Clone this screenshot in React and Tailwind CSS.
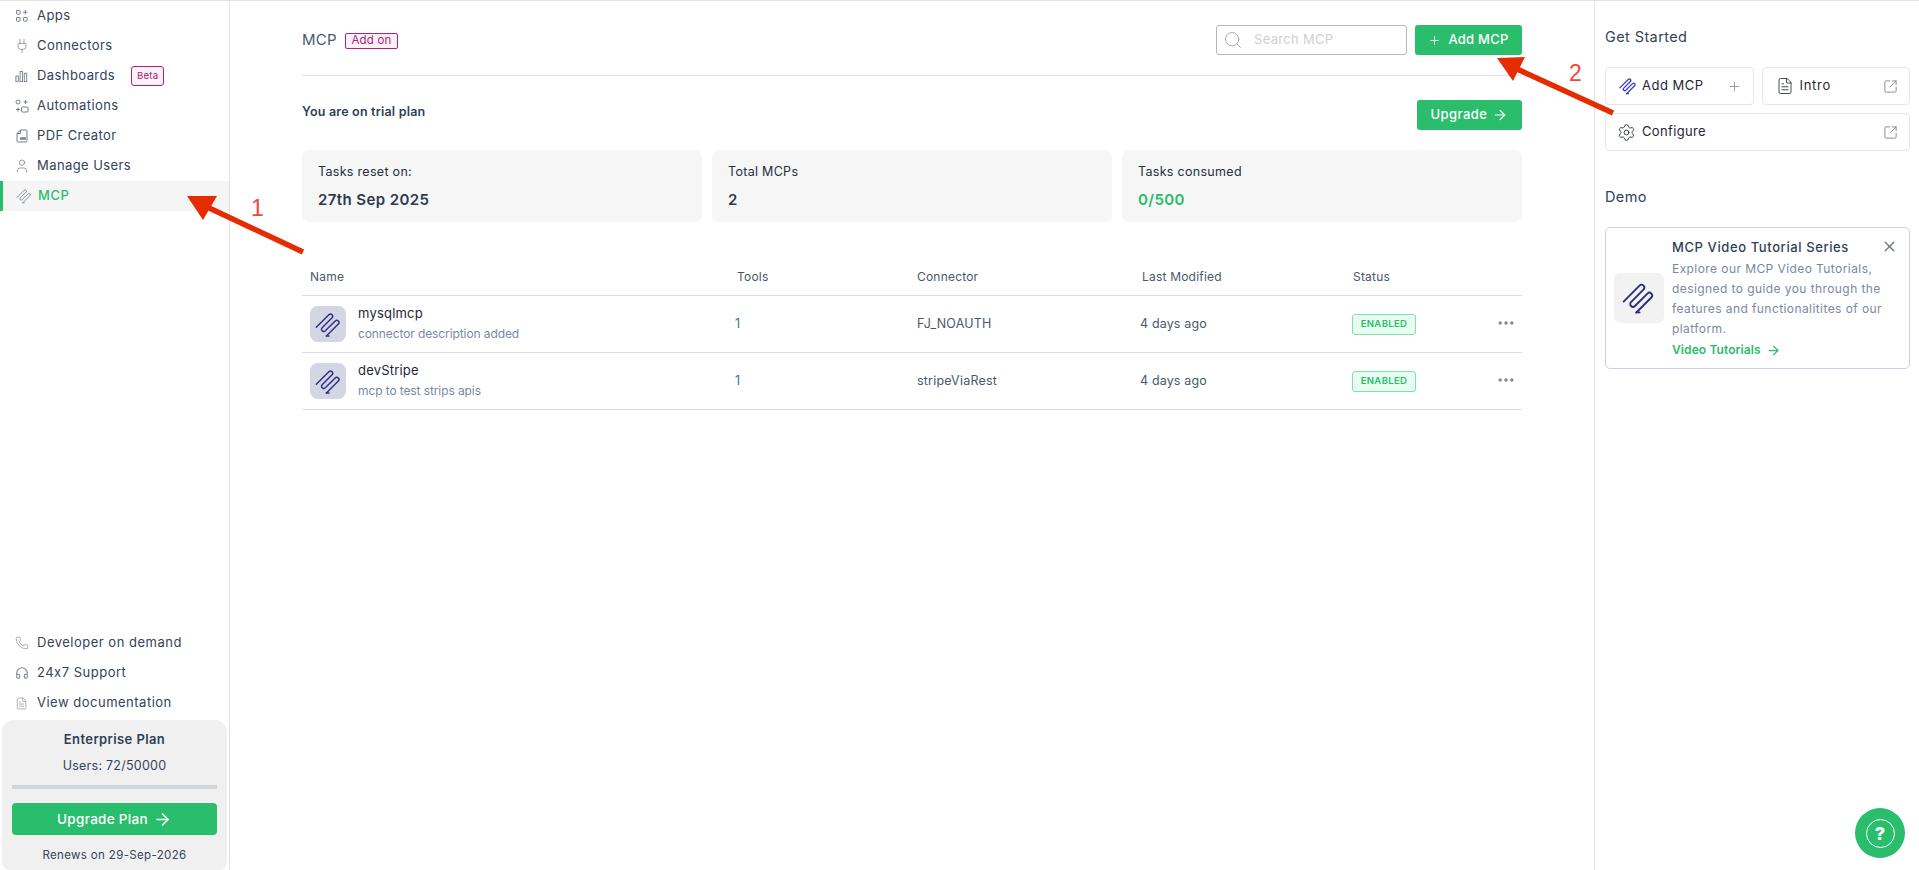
import { Plug, User, Phone, Headphones, FileText, Plus, Search, ArrowRight, Ellipsis, SquareArrowOutUpRight, Settings, X } from "lucide-react";

function McpIcon({ className, sw = 2 }) {
  return (
    <svg viewBox="0 0 28 28" fill="none" stroke="currentColor" strokeWidth={sw} strokeLinecap="round" strokeLinejoin="round" className={className}>
      <g transform="rotate(-45 14 14)">
        <path d="M3 7.1H21.5a2.3 2.3 0 0 1 0 4.6H7a2.3 2.3 0 0 0 0 4.6H21.5a2.3 2.3 0 0 1 0 4.6H4" />
      </g>
      <path d="M11.8 25.9h2.7" />
    </svg>
  );
}

function AppsIcon() {
  return (
    <svg viewBox="0 0 14 14" fill="none" stroke="currentColor" strokeWidth="1" className="w-[14px] h-[14px]">
      <rect x="1.5" y="1.5" width="3.6" height="3.6" rx="0.5" />
      <rect x="1.5" y="8.5" width="3.6" height="3.6" rx="0.5" />
      <rect x="8.5" y="8.5" width="3.6" height="3.6" rx="0.5" />
      <path d="M10.3 1v4.4M8.1 3.2h4.4" />
    </svg>
  );
}

function BarsIcon() {
  return (
    <svg viewBox="0 0 14 14" fill="none" stroke="currentColor" strokeWidth="1" className="w-[13px] h-[13px]">
      <rect x="1" y="6.5" width="2.6" height="6" />
      <rect x="5.5" y="1.5" width="2.6" height="11" />
      <rect x="10" y="3.5" width="2.6" height="9" />
    </svg>
  );
}

function FlowIcon() {
  return (
    <svg viewBox="0 0 14 14" fill="none" stroke="currentColor" strokeWidth="1" className="w-[14px] h-[14px]">
      <circle cx="3" cy="3" r="2" />
      <rect x="6.5" y="8" width="6.5" height="5" rx="1" />
      <path d="M10.5 1v4M8.5 3h4M1 10.5h4M3 8.5v4" />
    </svg>
  );
}

function PdfIcon() {
  return (
    <svg viewBox="0 0 14 14" fill="none" stroke="currentColor" strokeWidth="1" className="w-[14px] h-[14px]">
      <path d="M5.5 1h5.5a1 1 0 0 1 1 1v10a1 1 0 0 1-1 1H3a1 1 0 0 1-1-1V4.5z" />
      <path d="M5.5 1v3.5H2" />
      <path d="M5 9.5h6" strokeWidth="2.4" />
    </svg>
  );
}

const navItems = [
  { label: "Apps", icon: <AppsIcon /> },
  { label: "Connectors", icon: <Plug className="w-[16px] h-[16px] -ml-[1px]" strokeWidth={1.1} /> },
  { label: "Dashboards", icon: <BarsIcon /> , beta: true },
  { label: "Automations", icon: <FlowIcon /> },
  { label: "PDF Creator", icon: <PdfIcon /> },
  { label: "Manage Users", icon: <User className="w-[16px] h-[16px] -ml-[1px]" strokeWidth={1.1} /> },
];

const helpItems = [
  { label: "Developer on demand", icon: <Phone className="w-[14px] h-[14px]" strokeWidth={1.1} /> },
  { label: "24x7 Support", icon: <Headphones className="w-[14px] h-[14px]" strokeWidth={1.75} /> },
  { label: "View documentation", icon: <FileText className="w-[13px] h-[13px]" strokeWidth={1.1} /> },
];

const rows = [
  { name: "mysqlmcp", desc: "connector description added", connector: "FJ_NOAUTH" },
  { name: "devStripe", desc: "mcp to test strips apis", connector: "stripeViaRest" },
];

function Sidebar() {
  return (
    <aside className="w-[230px] shrink-0 border-r border-[#e2e2e2] flex flex-col justify-between">
      <nav className="flex flex-col">
        {navItems.map((item) => (
          <div key={item.label} className="h-[30px] pl-[15px] flex items-center text-[13px] tracking-[0.42px] text-[#33435a]">
            <span className="w-[22px] text-[#77808c] flex">{item.icon}</span>
            <span>{item.label}</span>
            {item.beta && (
              <span className="ml-[16px] h-[20px] w-[33px] flex items-center justify-center rounded-[3px] border border-[#ab2277] bg-[#fdf1f8] text-[#ab2277] text-[9.5px] tracking-[0.3px]">Beta</span>
            )}
          </div>
        ))}
        <div className="h-[30px] pl-[15px] flex items-center text-[13px] tracking-[0.55px] text-[#2abd6c] font-medium bg-[#f5f5f5] border-l-[3px] border-[#2abd6c]">
          <span className="w-[22px] -ml-[2px] text-[#808890] flex"><McpIcon className="w-[16px] h-[16px]" sw={1.5} /></span>
          <span>MCP</span>
        </div>
      </nav>
      <div className="flex flex-col">
        {helpItems.map((item) => (
          <div key={item.label} className="h-[30px] pl-[15px] flex items-center text-[13px] tracking-[0.5px] text-[#33435a]">
            <span className="w-[22px] text-[#77808c] flex">{item.icon}</span>
            <span>{item.label}</span>
          </div>
        ))}
        <div className="mt-[2px] mx-[2px] h-[150px] rounded-t-[12px] rounded-b-[8px] bg-[#f0f0f0] px-[10px] flex flex-col items-center">
          <div className="mt-[11px] text-[13px] leading-[16px] font-semibold tracking-[0.4px] text-[#2f3f56]">Enterprise Plan</div>
          <div className="mt-[11px] text-[12.5px] leading-[16px] tracking-[0.25px] text-[#33435a]">Users: 72/50000</div>
          <div className="mt-[11px] h-[4px] w-full bg-[#d1d6d8]" />
          <div className="mt-[14px] h-[32px] w-full rounded-[4px] bg-[#2abd6c] text-white text-[13.5px] font-medium tracking-[0.3px] flex items-center justify-center gap-[5px]">
            Upgrade Plan <ArrowRight className="w-[19px] h-[19px]" strokeWidth={2} />
          </div>
          <div className="mt-[12px] text-[11.5px] leading-[16px] tracking-[0.35px] text-[#33435a]">Renews on 29-Sep-2026</div>
        </div>
      </div>
    </aside>
  );
}

function StatCard({ label, value, green }) {
  return (
    <div className="h-[72px] rounded-[7px] bg-[#f6f6f6] px-[16px] pt-[14px]">
      <div className="text-[12.5px] leading-[16px] tracking-[0.3px] text-[#26303f]">{label}</div>
      <div className={`mt-[11px] text-[15px] leading-[18px] font-semibold tracking-[0.4px] ${green ? "text-[#2abd6c]" : "text-[#2c3a4e]"}`}>{value}</div>
    </div>
  );
}

function Main() {
  return (
    <main className="flex-1 px-[72px]">
      <div className="h-[75px] border-b border-[#e2e2e2] pt-[24px] flex justify-between">
        <div className="h-[30px] flex items-center gap-[8px]">
          <span className="mt-[1px] text-[15px] tracking-[0.3px] text-[#4a586c]">MCP</span>
          <span className="mt-[1px] h-[16px] w-[53px] flex items-center justify-center rounded-[2px] border border-[#ab2277] bg-[#fdf1f8] text-[#ab2277] text-[11.5px] tracking-[0.2px]">Add on</span>
        </div>
        <div className="flex gap-[8px]">
          <div className="w-[191px] h-[30px] rounded-[3px] border border-[#b4b9c0] flex items-center pl-[6px]">
            <Search className="w-[20px] h-[20px] text-[#a5a5a5]" strokeWidth={1.1} />
            <span className="ml-[11px] text-[13px] tracking-[0.3px] text-[#d0d0d0]">Search MCP</span>
          </div>
          <div className="w-[107px] h-[30px] rounded-[3px] bg-[#2abd6c] text-white text-[13px] font-medium tracking-[0.25px] flex items-center justify-center gap-[7px]">
            <Plus className="w-[13px] h-[13px]" strokeWidth={1.6} /> Add MCP
          </div>
        </div>
      </div>
      <div className="mt-[24px] flex items-center justify-between h-[30px]">
        <span className="-mt-[5px] text-[12.5px] font-semibold tracking-[0.2px] text-[#2f3f56]">You are on trial plan</span>
        <div className="w-[105px] h-[30px] rounded-[3px] bg-[#2abd6c] text-white text-[13px] font-medium tracking-[0.45px] flex items-center justify-center gap-[5px]">
          Upgrade <ArrowRight className="w-[16px] h-[16px]" strokeWidth={1.75} />
        </div>
      </div>
      <div className="mt-[20px] grid grid-cols-3 gap-[10px]">
        <StatCard label="Tasks reset on:" value="27th Sep 2025" />
        <StatCard label="Total MCPs" value="2" />
        <StatCard label="Tasks consumed" value="0/500" green />
      </div>
      <div className="mt-[40px]">
        <div className="h-[34px] flex items-start text-[12px] leading-[30px] tracking-[0.2px] text-[#4a586c] border-b border-[#dcdcdc]">
          <div className="w-[435px] pl-[8px]">Name</div>
          <div className="w-[180px]">Tools</div>
          <div className="w-[225px]">Connector</div>
          <div className="w-[211px]">Last Modified</div>
          <div>Status</div>
        </div>
        {rows.map((r) => (
          <div key={r.name} className="h-[57px] flex items-center border-b border-[#dcdcdc]">
            <div className="w-[433px] pl-[8px] flex items-center gap-[12px]">
              <div className="w-[36px] h-[36px] rounded-[8px] bg-[#d4d6e3] flex items-center justify-center text-[#2f2f85]">
                <McpIcon className="w-[27px] h-[27px]" sw={1.5} />
              </div>
              <div>
                <div className="-mt-[2px] text-[13px] leading-[18px] tracking-[0.2px] text-[#1f2733]">{r.name}</div>
                <div className="mt-[4px] text-[12px] leading-[16px] tracking-[-0.1px] text-[#7a88a3]">{r.desc}</div>
              </div>
            </div>
            <div className="w-[182px] text-[12.5px] text-[#3f6ea0]">1</div>
            <div className="w-[225px] text-[12.5px] tracking-[0.2px] text-[#4a586c]">{r.connector}</div>
            <div className="w-[211px] -ml-[2px] text-[12.5px] tracking-[0.15px] text-[#4a586c]">4 days ago</div>
            <div className="w-[64px] h-[21px] ml-[1px] rounded-[3px] border border-[#7fe0ab] bg-[#e8fdf2] text-[#2abd6c] text-[9.5px] font-semibold tracking-[0.35px] flex items-center justify-center">ENABLED</div>
            <div className="ml-[78px] -mt-[2px] flex text-[#858b95]"><Ellipsis className="w-[24px] h-[20px]" strokeWidth={2.2} /></div>
          </div>
        ))}
      </div>
    </main>
  );
}

function RightPanel() {
  return (
    <aside className="w-[325px] shrink-0 border-l border-[#e2e2e2] pl-[10px] pr-[9px]">
      <div className="mt-[26px] text-[14.5px] leading-[20px] tracking-[0.4px] text-[#33435a]">Get Started</div>
      <div className="mt-[20px] grid grid-cols-2 gap-[8px]">
        <div className="h-[38px] rounded-[4px] border border-[#e5e6ea] pl-[13px] pr-[11px] flex items-center text-[#1f2733] text-[13px] tracking-[0.5px]">
          <McpIcon className="w-[18px] h-[18px] text-[#3d3da6]" sw={2} />
          <span className="ml-[5px] flex-1">Add MCP</span>
          <Plus className="w-[15px] h-[15px] text-[#999]" strokeWidth={1.5} />
        </div>
        <div className="h-[38px] rounded-[4px] border border-[#e5e6ea] pl-[13px] pr-[11px] flex items-center text-[#1f2733] text-[13px] tracking-[0.7px]">
          <FileText className="w-[18px] h-[18px]" strokeWidth={1.1} />
          <span className="ml-[6px] flex-1">Intro</span>
          <SquareArrowOutUpRight className="w-[15px] h-[15px] text-[#888]" strokeWidth={1.5} />
        </div>
        <div className="col-span-2 h-[38px] rounded-[4px] border border-[#e5e6ea] pl-[11px] pr-[11px] flex items-center text-[#1f2733] text-[13px] tracking-[0.35px]">
          <Settings className="w-[19px] h-[19px]" strokeWidth={1.1} />
          <span className="ml-[6px] flex-1">Configure</span>
          <SquareArrowOutUpRight className="w-[15px] h-[15px] text-[#888]" strokeWidth={1.5} />
        </div>
      </div>
      <div className="mt-[36px] text-[14.5px] leading-[20px] tracking-[0.4px] text-[#33435a]">Demo</div>
      <div className="mt-[20px] h-[142px] rounded-[5px] border border-[#d0d1de] pl-[8px] pr-[10px] flex items-start relative">
        <div className="mt-[45px] w-[50px] h-[50px] shrink-0 rounded-[6px] bg-[#f2f2f2] flex items-center justify-center text-[#2b2b7c]">
          <McpIcon className="w-[34px] h-[34px]" sw={1.5} />
        </div>
        <div className="ml-[8px]">
          <div className="mt-[10px] text-[13px] leading-[18px] font-medium tracking-[0.6px] text-[#2f3f56]">MCP Video Tutorial Series</div>
          <p className="mt-[3px] text-[12px] leading-[20px] tracking-[0.42px] text-[#7a88a3]">Explore our MCP Video Tutorials, designed to guide you through the features and functionalitites of our platform.</p>
          <div className="mt-[1px] text-[12px] leading-[20px] font-semibold tracking-[0.1px] text-[#2abd6c] flex items-center gap-[5px]">
            Video Tutorials <ArrowRight className="w-[15px] h-[15px]" strokeWidth={2} />
          </div>
        </div>
        <X className="absolute right-[11px] top-[10px] w-[17px] h-[17px] text-[#6e7784]" strokeWidth={2} />
      </div>
    </aside>
  );
}

// red annotation arrows sit on top of the screenshot
function Annotations() {
  return (
    <svg width="1919" height="870" className="absolute inset-0 pointer-events-none">
      <path d="M303 251L207 206" stroke="#e52b00" strokeWidth="5.5" />
      <path d="M187 195L217 195L203 219z" fill="#e52b00" />
      <path d="M1613 112L1517 68" stroke="#e52b00" strokeWidth="5.5" />
      <path d="M1497 57L1525 56L1513 80z" fill="#e52b00" />
    </svg>
  );
}

export default function App() {
  return (
    <div className="relative h-[870px] w-[1919px] overflow-hidden bg-white flex border-t border-[#e2e2e2] font-['Inter','Liberation_Sans',sans-serif]">
      <Sidebar />
      <Main />
      <RightPanel />
      <Annotations />
      <span className="absolute left-[251px] top-[194px] font-['Liberation_Sans',sans-serif] text-[23px] leading-[26px] text-[#f0483e]">1</span>
      <span className="absolute left-[1569px] top-[59px] font-['Liberation_Sans',sans-serif] text-[23px] leading-[26px] text-[#f0483e]">2</span>
      <div className="absolute left-[1855px] top-[807px] w-[50px] h-[50px] rounded-full bg-[#2abd6c] flex items-center justify-center">
        <div className="w-[29px] h-[29px] rounded-full border-[1.5px] border-white flex items-center justify-center text-white text-[18px] font-extrabold">?</div>
      </div>
    </div>
  );
}
